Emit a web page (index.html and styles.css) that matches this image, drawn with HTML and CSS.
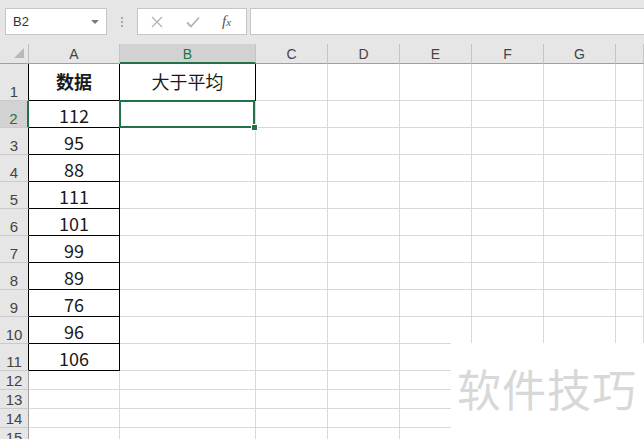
FILE: index.html
```html
<!DOCTYPE html>
<html>
<head>
    <meta charset="UTF-8">
    <title>大于平均</title>
    <link rel="stylesheet" href="styles.css">
</head>
<body>
    <div id="app">
        <div class="formula-bar">
            <div class="name-box">
                <span class="name">B2</span>
                <span class="caret"></span>
            </div>
            <div class="grip">
                <i></i><i></i><i></i>
            </div>
            <div class="fx-tools">
                <svg class="ico" width="12" height="12" viewBox="0 0 12 12"><path d="M1 1L11 11M11 1L1 11" stroke="#b4b4b4" stroke-width="1.4" fill="none"/></svg>
                <svg class="ico" width="14" height="12" viewBox="0 0 14 12"><path d="M1 6.5L5 10.5L13 1.5" stroke="#b4b4b4" stroke-width="1.8" fill="none"/></svg>
                <span class="fx">f<sub>x</sub></span>
            </div>
            <div class="fx-input"></div>
        </div>

        <div class="sheet">
            <!-- 列头 -->
            <div class="corner"><span class="tri"></span></div>
            <div class="ch">A</div>
            <div class="ch on">B</div>
            <div class="ch">C</div>
            <div class="ch">D</div>
            <div class="ch">E</div>
            <div class="ch">F</div>
            <div class="ch">G</div>
            <div class="ch"></div>

            <!-- 1 -->
            <div class="rh dk">1</div>
            <div class="c d top bold">数据</div>
            <div class="c d top">大于平均</div>
            <div class="c"></div><div class="c"></div><div class="c"></div><div class="c"></div><div class="c"></div><div class="c"></div>

            <!-- 2 -->
            <div class="rh on">2</div>
            <div class="c d">112</div>
            <div class="c sel"><span class="handle"></span></div>
            <div class="c"></div><div class="c"></div><div class="c"></div><div class="c"></div><div class="c"></div><div class="c"></div>

            <div class="rh dk">3</div><div class="c d">95</div><div class="c"></div>
            <div class="c"></div><div class="c"></div><div class="c"></div><div class="c"></div><div class="c"></div><div class="c"></div>

            <div class="rh dk">4</div><div class="c d">88</div><div class="c"></div>
            <div class="c"></div><div class="c"></div><div class="c"></div><div class="c"></div><div class="c"></div><div class="c"></div>

            <div class="rh dk">5</div><div class="c d">111</div><div class="c"></div>
            <div class="c"></div><div class="c"></div><div class="c"></div><div class="c"></div><div class="c"></div><div class="c"></div>

            <div class="rh dk">6</div><div class="c d">101</div><div class="c"></div>
            <div class="c"></div><div class="c"></div><div class="c"></div><div class="c"></div><div class="c"></div><div class="c"></div>

            <div class="rh dk">7</div><div class="c d">99</div><div class="c"></div>
            <div class="c"></div><div class="c"></div><div class="c"></div><div class="c"></div><div class="c"></div><div class="c"></div>

            <div class="rh dk">8</div><div class="c d">89</div><div class="c"></div>
            <div class="c"></div><div class="c"></div><div class="c"></div><div class="c"></div><div class="c"></div><div class="c"></div>

            <div class="rh dk">9</div><div class="c d">76</div><div class="c"></div>
            <div class="c"></div><div class="c"></div><div class="c"></div><div class="c"></div><div class="c"></div><div class="c"></div>

            <div class="rh dk">10</div><div class="c d">96</div><div class="c"></div>
            <div class="c"></div><div class="c"></div><div class="c"></div><div class="c"></div><div class="c"></div><div class="c"></div>

            <div class="rh dk">11</div><div class="c d">106</div><div class="c"></div>
            <div class="c"></div><div class="c"></div><div class="c"></div><div class="c"></div><div class="c"></div><div class="c"></div>

            <!-- 空行 -->
            <div class="rh">12</div><div class="c"></div><div class="c"></div>
            <div class="c"></div><div class="c"></div><div class="c"></div><div class="c"></div><div class="c"></div><div class="c"></div>

            <div class="rh">13</div><div class="c"></div><div class="c"></div>
            <div class="c"></div><div class="c"></div><div class="c"></div><div class="c"></div><div class="c"></div><div class="c"></div>

            <div class="rh">14</div><div class="c"></div><div class="c"></div>
            <div class="c"></div><div class="c"></div><div class="c"></div><div class="c"></div><div class="c"></div><div class="c"></div>

            <div class="rh">15</div><div class="c"></div><div class="c"></div>
            <div class="c"></div><div class="c"></div><div class="c"></div><div class="c"></div><div class="c"></div><div class="c"></div>
        </div>

        <!-- 水印 -->
        <div class="watermark">软件技巧</div>
    </div>
</body>
</html>
```

FILE: styles.css
```css
* {
  margin: 0px;
  padding: 0px;
  box-sizing: border-box;
}
html, body {
  height: 100%;
  overflow: hidden;
  background: #fff;
}
#app {
  position: relative;
  width: 100%;
  height: 100%;
  overflow: hidden;
  font-family: "Noto Sans CJK SC", "Liberation Sans", sans-serif;
}
.formula-bar {
  display: flex;
  align-items: center;
  height: 44px;
  padding: 0px 0px 1px 5px;
  background: #e6e6e6;
}
.name-box {
  display: flex;
  align-items: center;
  justify-content: space-between;
  width: 102px;
  height: 27px;
  padding: 0px 7px 0px 7px;
  background: #fff;
  border: 1px solid #c6c6c6;
}
.name {
  font-family: "Liberation Sans", sans-serif;
  font-size: 13px;
  color: #333;
}
.caret {
  width: 0px;
  height: 0px;
  border-left: 4px solid transparent;
  border-right: 4px solid transparent;
  border-top: 4px solid #7a7a7a;
}
.grip {
  display: flex;
  flex-direction: column;
  gap: 2px;
  width: 30px;
  align-items: center;
}
.grip i {
  display: block;
  width: 2px;
  height: 2px;
  background: #a8a8a8;
}
.fx-tools {
  display: flex;
  align-items: center;
  width: 110px;
  height: 27px;
  padding-left: 13px;
  background: #fff;
  border: 1px solid #c6c6c6;
}
.fx-tools .ico {
  margin-right: 23px;
}
.fx-tools .ico + .ico {
  margin-right: 22px;
}
.fx {
  font-family: "Liberation Serif", serif;
  font-style: italic;
  font-size: 15px;
  color: #555;
}
.fx sub {
  font-size: 11px;
  vertical-align: 0px;
}
.fx-input {
  flex: 1;
  height: 27px;
  margin-left: 3px;
  margin-right: -2px;
  background: #fff;
  border: 1px solid #c6c6c6;
}
.sheet {
  display: grid;
  grid-template-columns: 29px 91px 136px repeat(5, 72px) 1fr;
  grid-template-rows: 20px 37px repeat(10, 27px) repeat(4, 19px);
}
.corner {
  display: flex;
  align-items: flex-end;
  justify-content: flex-end;
  padding: 0px 4px 5px 0px;
  background: #e6e6e6;
  border-right: 1px solid #bdbdbd;
  border-bottom: 1px solid #9e9e9e;
}
.tri {
  width: 0px;
  height: 0px;
  border-left: 10px solid transparent;
  border-bottom: 10px solid #b9b9b9;
}
.ch {
  display: flex;
  align-items: center;
  justify-content: center;
  padding-top: 1px;
  font-family: "Liberation Sans", sans-serif;
  font-size: 14px;
  color: #444;
  background: #e6e6e6;
  border-right: 1px solid #c4c4c4;
  border-bottom: 1px solid #9e9e9e;
}
.ch.on {
  color: #217346;
  background: #d2d2d2;
  border-bottom: 2px solid #217346;
}
.rh {
  display: flex;
  align-items: flex-end;
  justify-content: center;
  font-family: "Liberation Sans", sans-serif;
  font-size: 15px;
  line-height: 17px;
  color: #444;
  background: #e6e6e6;
  border-right: 1px solid #9e9e9e;
  border-bottom: 1px solid #cacaca;
}
.rh.dk {
  border-right: 1px solid #000;
}
.rh.on {
  color: #217346;
  background: #d2d2d2;
  border-right: 2px solid #217346;
}
.c {
  display: flex;
  align-items: flex-end;
  justify-content: center;
  font-size: 18px;
  line-height: 23px;
  color: #1a1a1a;
  border-right: 1px solid #d9d9d9;
  border-bottom: 1px solid #d9d9d9;
}
.c.d {
  border-right: 1px solid #000;
  border-bottom: 1px solid #000;
}
.c.top {
  align-items: center;
  padding-bottom: 1px;
}
.c.bold {
  font-weight: bold;
}
.c.sel {
  position: relative;
}
.c.sel::after {
  content: "";
  position: absolute;
  left: -1px;
  top: -1px;
  right: 0px;
  bottom: -1px;
  border: 2px solid #217346;
}
.handle {
  position: absolute;
  right: -3px;
  bottom: -4px;
  width: 7px;
  height: 7px;
  background: #217346;
  border: 1px solid #fff;
  z-index: 2;
}
.watermark {
  position: absolute;
  left: 451px;
  top: 343px;
  width: 193px;
  height: 96px;
  padding: 15px 0px 0px 6px;
  background: #fff;
  font-size: 44px;
  line-height: 60px;
  letter-spacing: 1px;
  color: #d8d8d8;
}
```
